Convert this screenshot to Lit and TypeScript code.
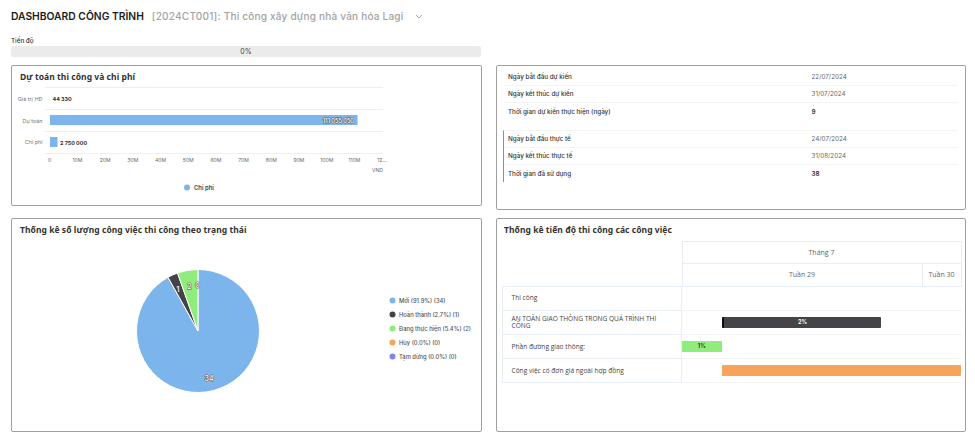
import { LitElement, html, css, svg } from "lit";
import { customElement } from "lit/decorators.js";

const BLUE = "#7cb5ec";

function slice(cx: number, cy: number, r: number, a0: number, a1: number, fill: string) {
  const p = (a: number) => [cx + r * Math.sin(a), cy - r * Math.cos(a)];
  const [x0, y0] = p(a0);
  const [x1, y1] = p(a1);
  const large = a1 - a0 > Math.PI ? 1 : 0;
  return svg`<path d="M${cx} ${cy}L${x0} ${y0}A${r} ${r} 0 ${large} 1 ${x1} ${y1}Z" fill=${fill} stroke="#fff" stroke-width="1"/>`;
}

@customElement("app-root")
export class AppRoot extends LitElement {
  static styles = css`
    :host { display: block; width: 975px; height: 435px; background: #fff; overflow: hidden; font-family: Inter, "Noto Sans", sans-serif; color: #333; }
    .page { padding: 8px 9px 0 11px; box-sizing: border-box; }
    .head { display: flex; align-items: center; height: 16px; white-space: nowrap; }
    .head b { font-weight: 600; color: #1c1c1c; font-size: 10.3px; }
    .head span { color: #a3a3a3; font-weight: 500; margin-left: 8px; font-size: 10.05px; letter-spacing: 0.2px; }
    .head svg { margin-left: 11px; }
    .plabel { margin-top: 13px; font-size: 6.3px; font-weight: 500; line-height: 9px; color: #333; }
    .pbar { width: 470px; height: 11px; background: #ebebeb; border-radius: 2px; text-align: center; font-size: 7px; line-height: 11px; color: #444; }
    .grid { margin-top: 8px; display: grid; grid-template-columns: 471px 470px; column-gap: 14px; grid-template-rows: 145px 214px; row-gap: 8px; }
    .card { border: 1px solid #a0a0a0; border-radius: 2px; box-sizing: border-box; background: #fff; overflow: hidden; }
    .short { height: 141px; }
    h3 { margin: 0; font-family: "Noto Sans", "Open Sans", sans-serif; font-weight: 700; font-size: 8.5px; line-height: 14px; color: #333; letter-spacing: 0.05px; padding: 4px 0 0 8px; }
    .r h3 { padding-left: 7px; }
    svg text { font-family: Inter, "Noto Sans", sans-serif; }
    .chart { display: block; }
    .info { padding: 3px 7px 0 6px; }
    .grp + .grp { margin-top: 9.5px; border-left: 1px solid #8f8f8f; border-top: 1px solid #f3f3f3; }
    .grp + .grp .row { height: 17px; }
    .grp:first-child { padding-left: 1px; }
    .row { display: flex; align-items: center; height: 17.2px; border-bottom: 1px solid #f3f3f3; box-sizing: border-box; font-size: 6.3px; font-weight: 500; color: #333; padding-left: 4px; }
    .row:last-child { border-bottom: none; }
    .row .k { width: 303.5px; }
    .row .v { color: #666; font-weight: 400; }
    .row .v.s { color: #333; font-weight: 600; }
    .gantt { display: grid; grid-template-columns: 180px 280px; margin: 4px 0 0 4.5px; }
    .ghead { grid-column: 2; border: 1px solid #e6ecf8; border-bottom: none; box-sizing: border-box; font-family: "Open Sans", "Noto Sans", sans-serif; font-size: 7px; color: #666; }
    .gm { height: 22px; display: flex; align-items: center; justify-content: center; border-bottom: 1px solid #e6ecf8; box-sizing: border-box; }
    .gw { height: 21.5px; display: flex; }
    .gw div { display: flex; align-items: center; justify-content: center; }
    .gw .a { width: 239px; border-right: 1px solid #e6ecf8; }
    .gw .b { flex: 1; }
    .tasks { grid-column: 1 / span 2; display: grid; grid-template-columns: 180px 280px; border-top: 1px solid #e6ecf8; }
    .tname { height: 24.2px; border: 1px solid #e6ecf8; border-top: none; box-sizing: border-box; padding: 0 8px 0 9px; display: flex; align-items: center; font-family: "Open Sans", "Noto Sans", sans-serif; font-size: 6.6px; font-weight: 500; line-height: 7.6px; color: #444; }
    .tbar { height: 24.2px; border-bottom: 1px solid #f3f3f3; box-sizing: border-box; display: flex; align-items: center; }
    .bar { height: 11px; border-radius: 1px; display: flex; align-items: center; justify-content: center; font-size: 5.5px; font-weight: 700; box-sizing: border-box; }
    .bar.dark { background: #434348; color: #fff; border-left: 2.5px solid #0c0c0c; }
    .bar.green { background: #90ed7d; color: #333; }
    .bar.orange { background: #f7a35c; }
  `;

  pie() {
    const total = 37;
    const cx = 186, cy = 94, r = 61.5;
    const data: [number, string][] = [[34, BLUE], [1, "#434348"], [2, "#90ed7d"]];
    let a = 0;
    const parts = data.map(([v, c]) => {
      const a1 = a + (v / total) * Math.PI * 2;
      const s = slice(cx, cy, r, a, a1, c);
      a = a1;
      return s;
    });
    const legend = [
      ["Mới (91.9%) (34)", BLUE],
      ["Hoàn thành (2.7%) (1)", "#434348"],
      ["Đang thực hiện (5.4%) (2)", "#90ed7d"],
      ["Hủy (0.0%) (0)", "#f7a35c"],
      ["Tạm dừng (0.0%) (0)", "#8085e9"],
    ];
    const labels: [string, number, number][] = [["34", 197, 144], ["1", 166, 55], ["2", 177.5, 52], ["0", 185.5, 50.5]];
    return html`<svg class="chart" width="469" height="190" viewBox="0 0 469 190">
      ${parts}
      ${labels.map(([t, x, y]) => svg`<text x=${x} y=${y} text-anchor="middle" font-size="7" font-weight="500" fill="#fff" stroke="#555" stroke-width="1" paint-order="stroke">${t}</text>`)}
      ${legend.map(([t, c], i) => svg`
        <circle cx="380.5" cy=${63.5 + i * 14} r="3" fill=${c}/>
        <text x="387" y=${65.6 + i * 14} font-size="5.8" font-weight="500" fill="#555">${t}</text>`)}
    </svg>`;
  }

  render() {
    const plan = [["Ngày bắt đầu dự kiến", "22/07/2024"], ["Ngày kết thúc dự kiến", "31/07/2024"], ["Thời gian dự kiến thực hiện (ngày)", "9"]];
    const real = [["Ngày bắt đầu thực tế", "24/07/2024"], ["Ngày kết thúc thực tế", "31/08/2024"], ["Thời gian đã sử dụng", "38"]];
    const row = ([k, v]: string[]) => html`<div class="row"><div class="k">${k}</div><div class="v ${v.length < 3 ? "s" : ""}">${v}</div></div>`;
    const tasks: [string, string, number, number, string][] = [
      ["Thi công", "", 0, 0, ""],
      ["AN TOÀN GIAO THÔNG TRONG QUÁ TRÌNH THI CÔNG", "dark", 40.5, 159, "2%"],
      ["Phần đường giao thông:", "green", 0.5, 39.5, "1%"],
      ["Công việc có đơn giá ngoài hợp đồng", "orange", 40.5, 239, ""],
    ];
    return html`<div class="page">
      <div class="head">
        <b>DASHBOARD CÔNG TRÌNH</b><span>[2024CT001]: Thi công xây dựng nhà văn hóa Lagi</span>
        <svg width="8" height="5" viewBox="0 0 8 5"><path d="M1 1l3 3 3-3" fill="none" stroke="#999" stroke-width="0.8"/></svg>
      </div>
      <div class="plabel">Tiến độ</div>
      <div class="pbar">0%</div>
      <div class="grid">
        <div class="card short">
          <h3>Dự toán thi công và chi phí</h3>
          <svg class="chart" width="469" height="120" viewBox="0 0 469 120">
            ${[3.5, 25.5, 47.5, 69.5].map((y) => svg`<line x1="33" x2="371" y1=${y} y2=${y} stroke="#efefef"/>`)}
            <text x="30.5" y="16.5" text-anchor="end" font-size="5.4" fill="#777">Giá trị HĐ</text>
            <text x="30.5" y="38.5" text-anchor="end" font-size="5.4" fill="#777">Dự toán</text>
            <text x="30.5" y="60" text-anchor="end" font-size="5.4" fill="#777">Chi phí</text>
            <rect x="38" y="31" width="307.5" height="10" fill=${BLUE} />
            <rect x="38" y="53" width="7.5" height="10" fill=${BLUE} />
            <text x="40.5" y="17" font-size="5.4" font-weight="700" fill="#333">44 330</text>
            <text x="48" y="61" font-size="5.4" font-weight="700" fill="#333">2 750 000</text>
            <text x="342" y="38.5" text-anchor="end" font-size="5.5" font-weight="600" fill="#fff" stroke="#555" stroke-width="1" paint-order="stroke">111 055 050</text>
            ${["0", "10M", "20M", "30M", "40M", "50M", "60M", "70M", "80M", "90M", "100M", "110M", "12..."].map(
              (t, i) => svg`<text x=${37.7 + i * 27.7} y="78" text-anchor="middle" font-size="5.1" fill="#666">${t}</text>`
            )}
            <text x="371" y="87.5" text-anchor="end" font-size="5.1" fill="#666">VND</text>
            <circle cx="175" cy="103.5" r="3" fill=${BLUE} />
            <text x="182" y="105.6" font-size="5.9" font-weight="600" fill="#444">Chi phí</text>
          </svg>
        </div>
        <div class="card">
          <div class="info">
            <div class="grp">${plan.map(row)}</div>
            <div class="grp">${real.map(row)}</div>
          </div>
        </div>
        <div class="card">
          <h3>Thống kê số lượng công việc thi công theo trạng thái</h3>
          ${this.pie()}
        </div>
        <div class="card r">
          <h3>Thống kê tiến độ thi công các công việc</h3>
          <div class="gantt">
            <div class="ghead">
              <div class="gm">Tháng 7</div>
              <div class="gw"><div class="a">Tuần 29</div><div class="b">Tuần 30</div></div>
            </div>
            <div class="tasks">
              ${tasks.map(([n, c, l, w, t]) => html`
                <div class="tname">${n}</div>
                <div class="tbar">${c ? html`<div class="bar ${c}" style="margin-left:${l}px;width:${w}px">${t}</div>` : ""}</div>`)}
            </div>
          </div>
        </div>
      </div>
    </div>`;
  }
}
